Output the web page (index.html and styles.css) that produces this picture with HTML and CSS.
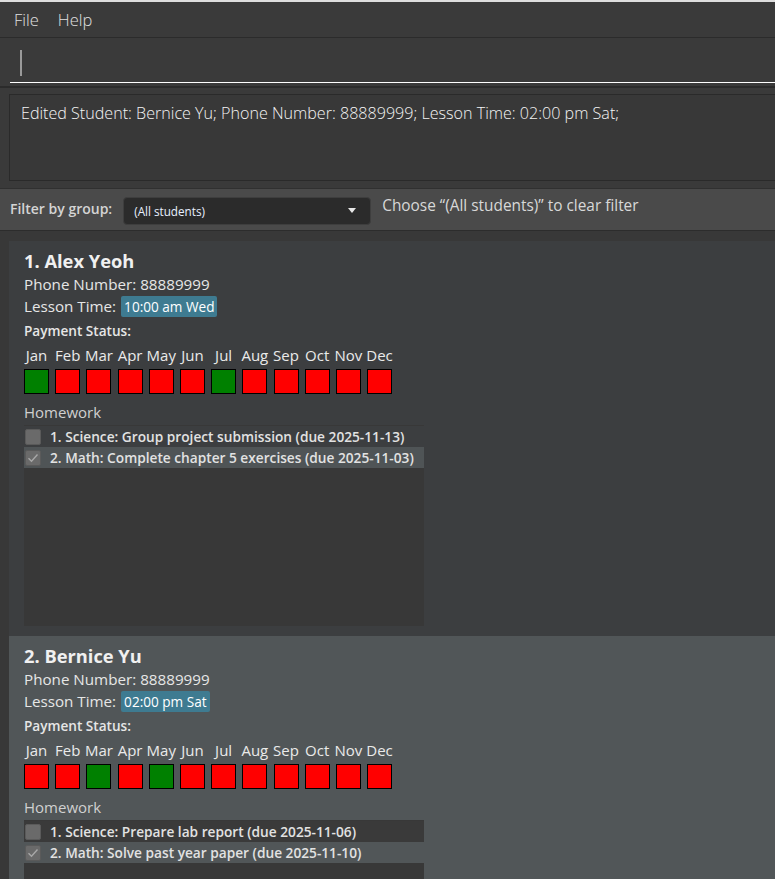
FILE: index.html
```html
<!DOCTYPE html>
<html>
<head>
<meta charset="utf-8">
<link rel="stylesheet" href="styles.css">
</head>
<body>
<div class="app">
  <div class="topline"></div>
  <div class="menubar"><span class="menu">File</span><span class="menu">Help</span></div>
  <div class="command"><div class="field"><span class="caret"></span></div></div>
  <div class="result-wrap">
    <div class="result">Edited Student: Bernice Yu; Phone Number: 88889999; Lesson Time: 02:00 pm Sat;</div>
  </div>
  <div class="filter">
    <span class="filter-label">Filter by group:</span>
    <div class="combo"><span>(All students)</span><span class="arrow"></span></div>
    <span class="hint">Choose “(All students)” to clear filter</span>
  </div>
  <div class="list">
    <div class="card even">
      <div class="name">1. Alex Yeoh</div>
      <div class="line">Phone Number: 88889999</div>
      <div class="line lesson">Lesson Time: <span class="tag">10:00 am Wed</span></div>
      <div class="pay">Payment Status:</div>
      <div class="months">
        <div class="month"><span>Jan</span><i class="box paid"></i></div>
        <div class="month"><span>Feb</span><i class="box"></i></div>
        <div class="month"><span>Mar</span><i class="box"></i></div>
        <div class="month"><span>Apr</span><i class="box"></i></div>
        <div class="month"><span>May</span><i class="box"></i></div>
        <div class="month"><span>Jun</span><i class="box"></i></div>
        <div class="month"><span>Jul</span><i class="box paid"></i></div>
        <div class="month"><span>Aug</span><i class="box"></i></div>
        <div class="month"><span>Sep</span><i class="box"></i></div>
        <div class="month"><span>Oct</span><i class="box"></i></div>
        <div class="month"><span>Nov</span><i class="box"></i></div>
        <div class="month"><span>Dec</span><i class="box"></i></div>
      </div>
      <div class="hw-title">Homework</div>
      <div class="hw-list">
        <div class="hw row-a"><span class="check"></span><span class="hw-text">1. Science: Group project submission (due 2025-11-13)</span></div>
        <div class="hw row-b"><span class="check"><svg width="16" height="16" viewBox="0 0 16 16"><path d="M3.5 8.2 L6.5 11.2 L12.5 4.5" fill="none" stroke="#a8a8a8" stroke-width="1.4"/></svg></span><span class="hw-text">2. Math: Complete chapter 5 exercises (due 2025-11-03)</span></div>
      </div>
    </div>
    <div class="card odd">
      <div class="name">2. Bernice Yu</div>
      <div class="line">Phone Number: 88889999</div>
      <div class="line lesson">Lesson Time: <span class="tag">02:00 pm Sat</span></div>
      <div class="pay">Payment Status:</div>
      <div class="months">
        <div class="month"><span>Jan</span><i class="box"></i></div>
        <div class="month"><span>Feb</span><i class="box"></i></div>
        <div class="month"><span>Mar</span><i class="box paid"></i></div>
        <div class="month"><span>Apr</span><i class="box"></i></div>
        <div class="month"><span>May</span><i class="box paid"></i></div>
        <div class="month"><span>Jun</span><i class="box"></i></div>
        <div class="month"><span>Jul</span><i class="box"></i></div>
        <div class="month"><span>Aug</span><i class="box"></i></div>
        <div class="month"><span>Sep</span><i class="box"></i></div>
        <div class="month"><span>Oct</span><i class="box"></i></div>
        <div class="month"><span>Nov</span><i class="box"></i></div>
        <div class="month"><span>Dec</span><i class="box"></i></div>
      </div>
      <div class="hw-title">Homework</div>
      <div class="hw-list">
        <div class="hw row-c"><span class="check"></span><span class="hw-text">1. Science: Prepare lab report (due 2025-11-06)</span></div>
        <div class="hw row-d"><span class="check"><svg width="16" height="16" viewBox="0 0 16 16"><path d="M3.5 8.2 L6.5 11.2 L12.5 4.5" fill="none" stroke="#a8a8a8" stroke-width="1.4"/></svg></span><span class="hw-text">2. Math: Solve past year paper (due 2025-11-10)</span></div>
      </div>
    </div>
  </div>
</div>
</body>
</html>
```

FILE: styles.css
```css
html, body {
  margin: 0;
  padding: 0;
  background: #383838;
  overflow: hidden;
}
.app {
  width: 775px;
  height: 879px;
  overflow: hidden;
  font-family: "Open Sans", "Noto Sans", sans-serif;
  color: #e6e6e6;
}
.topline {
  height: 2px;
  background: #dedede;
}
.menubar {
  height: 35px;
  background: #3a3a3a;
  border-bottom: 1px solid #2b2b2b;
  display: flex;
  align-items: center;
  padding-left: 14px;
  gap: 19px;
}
.menu {
  font-size: 16.5px;
  font-weight: 300;
  color: #e0e0e0;
}
.command {
  height: 50px;
  background: #3a3a3a;
  padding-left: 10px;
  border-bottom: 2px solid #2b2b2b;
  box-sizing: border-box;
}
.field {
  height: 44px;
  border-bottom: 1px solid #ffffff;
  position: relative;
}
.caret {
  position: absolute;
  left: 10px;
  top: 12px;
  width: 2px;
  height: 26px;
  background: #9a9a9a;
}
.result-wrap {
  background: #3a3a3a;
  padding: 6px 0 7px 9px;
}
.result {
  height: 87px;
  box-sizing: border-box;
  border: 1px solid #2a2a2a;
  border-right: none;
  background: #383838;
  padding: 7px 11px;
  font-size: 16.1px;
  font-weight: 300;
  color: #f4f4f4;
  white-space: nowrap;
}
.filter {
  height: 43px;
  box-sizing: border-box;
  background: #4a4a4a;
  border-top: 1px solid #303030;
  border-bottom: 1px solid #2c2c2c;
  display: flex;
  align-items: center;
  padding-left: 10px;
}
.filter-label {
  font-size: 14px;
  font-weight: 600;
  color: #d4d4d4;
  margin-top: -3px;
}
.combo {
  margin-left: 11px;
  width: 248px;
  height: 28px;
  box-sizing: border-box;
  background: #2b2b2b;
  border: 1px solid #3e3e3e;
  border-radius: 4px;
  display: flex;
  align-items: center;
  justify-content: space-between;
  padding: 0 14px 0 10px;
  font-size: 11.7px;
  color: #e8f0ff;
  margin-top: 2px;
}
.arrow {
  width: 0;
  height: 0;
  border-left: 4px solid transparent;
  border-right: 4px solid transparent;
  border-top: 5px solid #e8e8e8;
}
.hint {
  margin-left: 11px;
  font-size: 15.4px;
  color: #d8d8d8;
  margin-top: -9px;
}
.list {
  padding: 10px 0 0 9px;
}
.card {
  padding: 8px 0 10px 15px;
}
.card.even { background: #3c3e40; }
.card.odd { background: #515658; }
.name {
  font-size: 18.3px;
  font-weight: 700;
  line-height: 24px;
  color: #f0f0f0;
}
.line {
  font-size: 15.2px;
  line-height: 20px;
  color: #e6e6e6;
}
.name + .line { margin-top: 1px; }
.lesson {
  margin-top: 1px;
  line-height: 22px;
  height: 22px;
  display: flex;
  align-items: center;
  gap: 5px;
}
.tag {
  background: #3e7b91;
  color: #ffffff;
  border-radius: 2px;
  padding: 0 3px;
  line-height: 21px;
  font-size: 13.6px;
}
.pay {
  margin-top: 4px;
  font-size: 13.6px;
  font-weight: 600;
  line-height: 20px;
  color: #e6e6e6;
}
.months {
  display: grid;
  grid-template-columns: repeat(12, 25px);
  column-gap: 6.2px;
  margin-top: 4px;
}
.month {
  display: flex;
  flex-direction: column;
  align-items: center;
  width: 25px;
}
.month span {
  font-size: 15px;
  line-height: 20px;
  white-space: nowrap;
  color: #eaeaea;
}
.box {
  display: block;
  width: 25px;
  height: 25px;
  box-sizing: border-box;
  border: 1px solid #000;
  background: #ff0000;
  margin-top: 4px;
}
.box.paid { background: #008000; }
.hw-title {
  margin-top: 8px;
  font-size: 15px;
  line-height: 20px;
  color: #d0d0d0;
}
.hw-list {
  margin-top: 3px;
  width: 400px;
  height: 201px;
  background: #383838;
  padding-top: 1px;
  box-sizing: border-box;
}
.hw {
  height: 21px;
  display: flex;
  align-items: center;
}
.row-a { background: #3c3e40; }
.row-b { background: #4f5456; }
.row-c { background: #3a3a3a; }
.row-d { background: #515658; }
.check {
  width: 16px;
  height: 16px;
  margin-left: 1px;
  box-sizing: border-box;
  background: #6a6a6a;
  border: 1px solid #5a5a5a;
  border-radius: 2px;
  display: flex;
}
.check svg { display: block; margin: -1px; }
.hw-text {
  margin-left: 9px;
  font-size: 13.7px;
  font-weight: 600;
  color: #e2e2e2;
  white-space: nowrap;
}
```
